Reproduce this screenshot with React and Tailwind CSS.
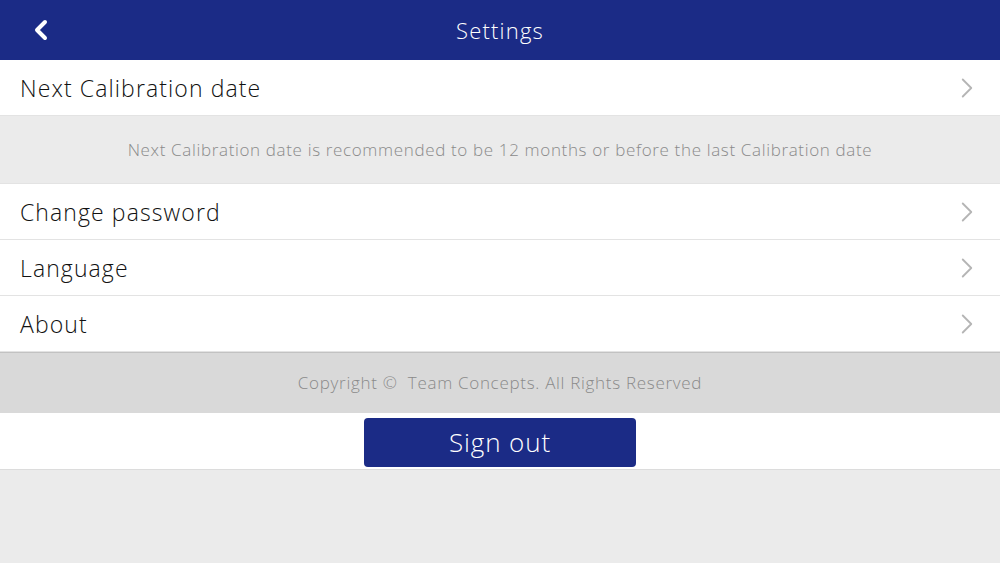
import { ChevronLeft, ChevronRight } from "lucide-react";

const FONT = { fontFamily: "'Open Sans', Lato, 'Liberation Sans', sans-serif" };

function Row({ label }) {
  return (
    <button
      type="button"
      className="flex h-[56px] w-full items-center justify-between border-b border-[#e3e3e3] bg-white pl-5 pr-[16px] text-left"
    >
      <span className="pt-[2px] text-[23px] font-light tracking-[1.1px] text-[#111]">{label}</span>
      <ChevronRight className="h-[34px] w-[34px] text-[#b5b5b5]" strokeWidth={1.3} />
    </button>
  );
}

export default function App() {
  return (
    <div className="flex h-[563px] w-[1000px] flex-col bg-[#ebebeb]" style={FONT}>
      <header className="relative flex h-[60px] shrink-0 items-center justify-center bg-[#1b2b86]">
        <button type="button" className="absolute left-[25px] top-[14px] text-white">
          <ChevronLeft className="h-[32px] w-[32px]" strokeWidth={3} />
        </button>
        <h1 className="text-[22px] font-light tracking-[1.2px] text-white">Settings</h1>
      </header>

      <Row label="Next Calibration date" />
      <div className="flex h-[68px] items-center justify-center border-b border-[#e3e3e3] bg-[#ebebeb]">
        <p className="text-[17px] font-light tracking-[0.65px] text-[#8a8a8a]">
          Next Calibration date is recommended to be 12 months or before the last Calibration date
        </p>
      </div>
      <Row label="Change password" />
      <Row label="Language" />
      <Row label="About" />

      <div className="flex h-[61px] items-center justify-center border-t border-[#c2c2c2] bg-[#d9d9d9]">
        <p className="text-[17px] font-light tracking-[0.7px] text-[#8a8a8a]">
          Copyright ©&nbsp; Team Concepts. All Rights Reserved
        </p>
      </div>
      <div className="flex h-[57px] items-start justify-center border-b border-[#dcdcdc] bg-white pt-[5px]">
        <button
          type="button"
          className="flex h-[49px] w-[272px] items-center justify-center rounded-[4px] bg-[#1b2b86] text-[26px] font-light tracking-[0.9px] text-white"
        >
          Sign out
        </button>
      </div>
    </div>
  );
}
